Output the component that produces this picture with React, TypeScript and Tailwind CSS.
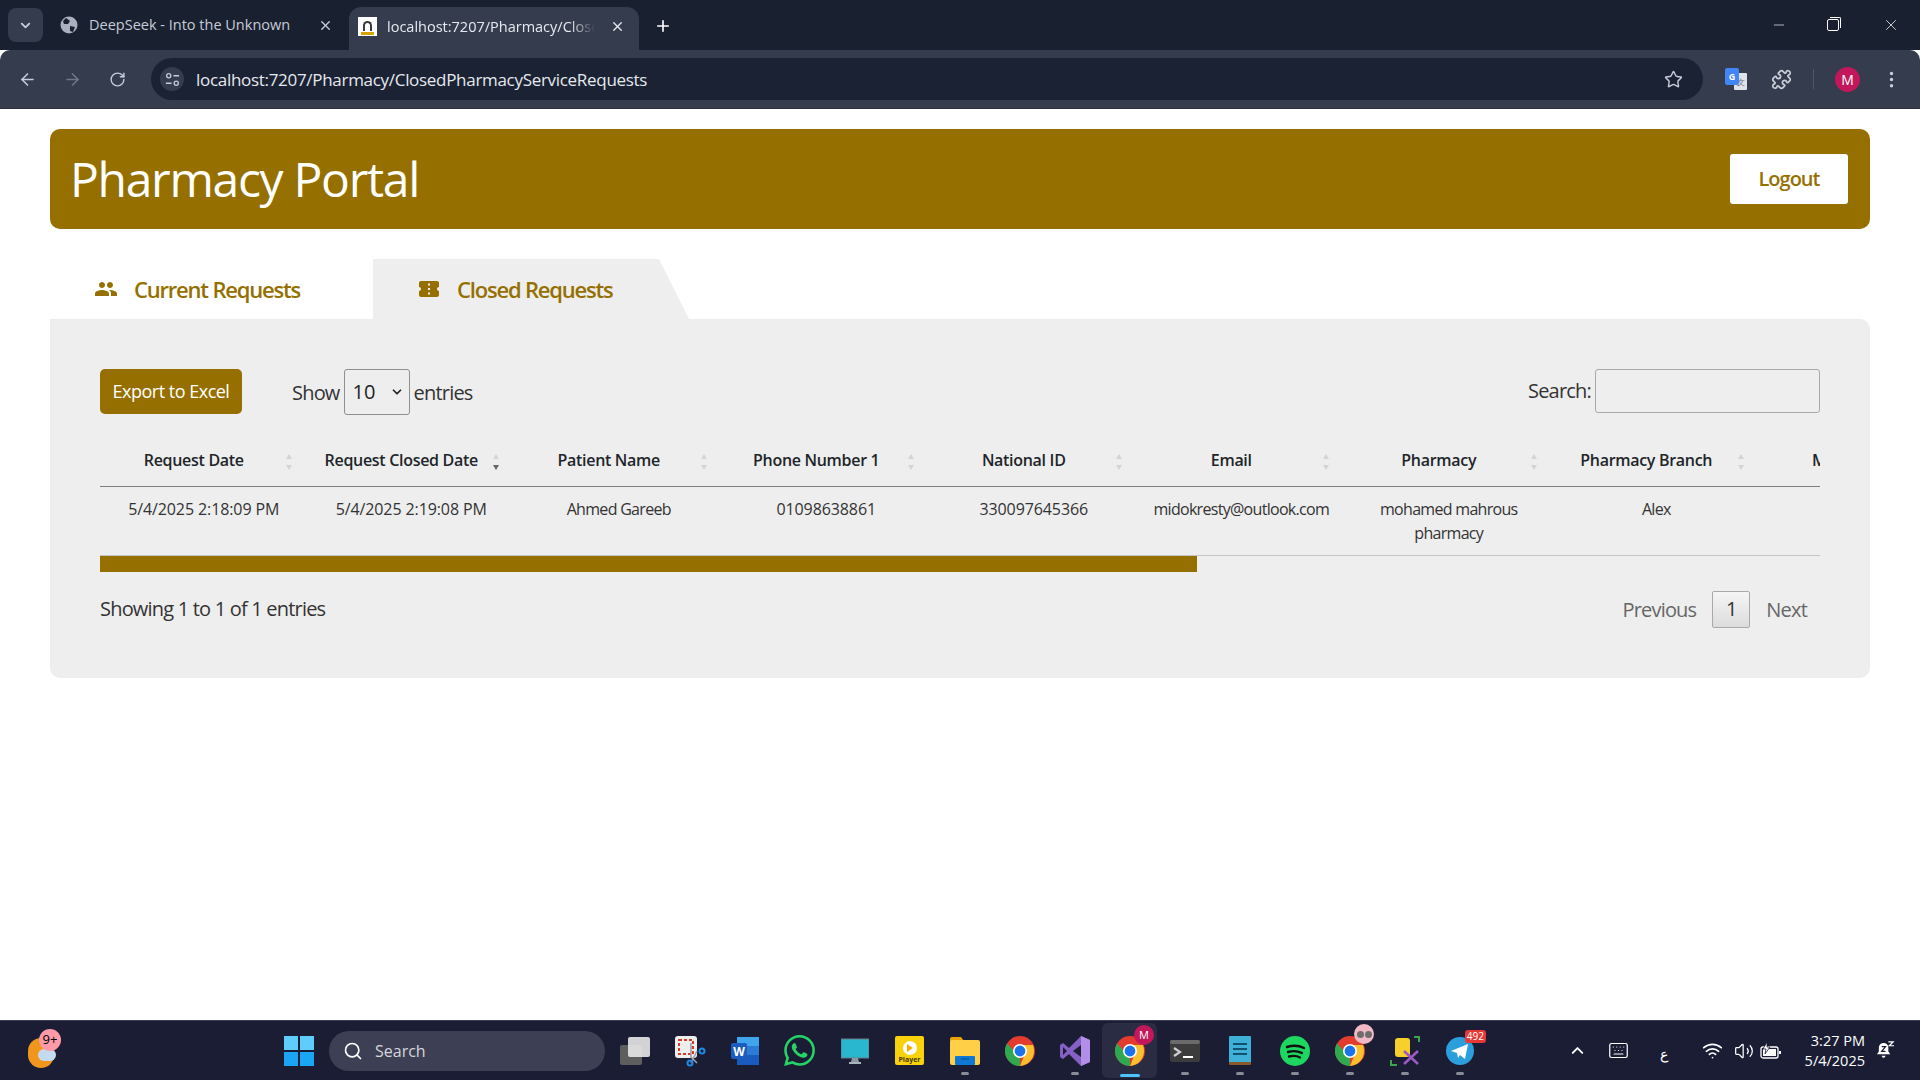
import React from 'react';
import { ArrowLeft, ArrowRight, RotateCw, Star, Puzzle, EllipsisVertical, ChevronDown, ChevronUp, X, Plus, Minus, Search, Wifi, Volume2, Keyboard } from 'lucide-react';

const gold = 'bg-[#957000]';

const columns = [
  { head: 'Request Date', cell: '5/4/2025 2:18:09 PM' },
  { head: 'Request Closed Date', cell: '5/4/2025 2:19:08 PM', sorted: true },
  { head: 'Patient Name', cell: 'Ahmed Gareeb', narrow: true },
  { head: 'Phone Number 1', cell: '01098638861' },
  { head: 'National ID', cell: '330097645366' },
  { head: 'Email', cell: 'midokresty@outlook.com', narrow: true },
  { head: 'Pharmacy', cell: 'mohamed mahrous pharmacy', narrow: true },
  { head: 'Pharmacy Branch', cell: 'Alex', narrow: true },
  { head: 'Medication', cell: '' },
];

const SortIcon = ({ active }: { active?: boolean }) => (
  <svg viewBox="0 0 8 18" className="absolute right-[15px] top-[19px] w-[8px] h-[18px]">
    <path d="M4 1 7 6H1z" fill="#d4d4d4" />
    <path d="M4 17 7 12H1z" fill={active ? '#666' : '#d4d4d4'} />
  </svg>
);

const Dot = () => <div className="absolute bottom-[3px] left-1/2 -translate-x-1/2 w-2 h-[3px] rounded-full bg-[#8a8b97]" />;

const TaskIcon = ({ children, dot, active }: { children: React.ReactNode; dot?: boolean; active?: boolean }) => (
  <div className={`relative w-[55px] h-[55px] flex items-center justify-center rounded-md ${active ? 'bg-[#2a2c44]' : ''}`}>
    {children}
    {dot && !active && <Dot />}
    {active && <div className="absolute bottom-[1px] left-1/2 -translate-x-1/2 w-5 h-[3px] rounded-full bg-[#4cc2ff]" />}
  </div>
);

const ChromeLogo = () => (
  <svg viewBox="0 0 30 30" className="w-[30px] h-[30px]">
    <circle cx="15" cy="15" r="15" fill="#e33b2e" />
    <path d="M15 30A15 15 0 0 1 2 7.5L9 15l6 7z" fill="#2fa84f" />
    <path d="M15 30 21 15h8A15 15 0 0 1 15 30z" fill="#fbc02d" />
    <path d="M15 9h13a15 15 0 0 1 1 6h-7z" fill="#fbc02d" />
    <circle cx="15" cy="15" r="7" fill="#fff" />
    <circle cx="15" cy="15" r="5.4" fill="#1a73e8" />
  </svg>
);

export default function App() {
  return (
    <div className="h-[1080px] w-[1920px] flex flex-col overflow-hidden bg-white font-['Open_Sans',sans-serif]">
      {/* browser tabs */}
      <div className="h-[50px] bg-[#19202f] flex items-end pl-[8px] text-[#c6ccd8] text-[14.5px] relative">
        <div className="self-start mt-[8px] w-[35px] h-[34px] rounded-lg bg-[#343c4d] flex items-center justify-center">
          <ChevronDown size={15} strokeWidth={3} />
        </div>
        <div className="w-[306px] h-[44px] flex items-center pl-[17px] pr-[16px] pb-[6px]">
          <svg viewBox="0 0 18 18" className="w-[18px] h-[18px]">
            <circle cx="9" cy="9" r="8.5" fill="#aab0bd" />
            <path d="M6 2 10 5 8 8 4 8 3 5zM10 10l5 1-2 5-3-1z" fill="#19202f" />
          </svg>
          <span className="ml-[11px] flex-1 whitespace-nowrap [font-stretch:95%]">DeepSeek - Into the Unknown</span>
          <X size={15} strokeWidth={2.2} />
        </div>
        <div className="w-[290px] h-[43px] rounded-t-xl bg-[#343c4d] flex items-center pl-[9px] pr-[12px] pb-[4px] text-[#e6e9ef]">
          <div className="w-[19px] h-[19px] bg-white flex flex-col items-center justify-end pb-[1px]">
            <div className="w-[9px] h-[10px] border-x-2 border-t-2 border-[#3a3a3a] rounded-t-full mb-[1px]" />
            <div className="w-[13px] h-[3px] bg-[#d5a400]" />
          </div>
          <span className="ml-[10px] w-[208px] overflow-hidden whitespace-nowrap [font-stretch:95%] [mask-image:linear-gradient(to_right,black_88%,transparent)]">localhost:7207/Pharmacy/Close</span>
          <X size={15} strokeWidth={2.2} className="ml-[15px]" />
        </div>
        <Plus size={18} strokeWidth={2.2} className="ml-[15px] mb-[15px] text-white" />
        <div className="ml-auto flex items-center self-start mt-[16px] text-white">
          <Minus size={16} strokeWidth={1} className="mr-[40px]" />
          <div className="relative w-[12px] h-[12px] border border-white rounded-[2px] mr-[43px]">
            <div className="absolute -top-[3px] -right-[3px] w-[11px] h-[11px] border-t border-r border-white rounded-tr-[2px]" />
          </div>
          <X size={18} strokeWidth={1} className="mr-[20px]" />
        </div>
      </div>

      {/* toolbar */}
      <div className="h-[59px] bg-[#343c4d] border-b border-[#2b3140] rounded-t-[10px] flex items-center pl-[18px] pr-[10px] text-[#c6ccd8]">
        <ArrowLeft size={19} />
        <ArrowRight size={19} className="ml-[26px] text-[#6f7686]" />
        <RotateCw size={17} className="ml-[27px]" />
        <div className="ml-[25px] w-[1552px] h-[42px] rounded-full bg-[#1a2233] flex items-center pl-[9px] pr-[20px]">
          <div className="w-[24px] h-[24px] rounded-full bg-[#343c4d] flex items-center justify-center">
            <svg viewBox="0 0 16 16" className="w-[15px] h-[15px]" fill="none" stroke="currentColor" strokeWidth="1.4">
              <circle cx="4" cy="4" r="2.2" />
              <path d="M9 4h6M1 12h6" />
              <circle cx="12" cy="12" r="2.2" />
            </svg>
          </div>
          <span className="ml-[12px] text-[17px] text-[#e6e9ef] tracking-[-0.3px] pt-[1px]">localhost:7207/Pharmacy/ClosedPharmacyServiceRequests</span>
          <Star size={19} className="ml-auto" strokeWidth={1.8} />
        </div>
        <div className="ml-[22px] relative w-[22px] h-[22px]">
          <div className="absolute right-0 bottom-0 w-[13px] h-[17px] bg-[#dfe3e8] rounded-[1px] text-[#5f6b7a] text-[8px] leading-[17px] text-right pr-[2px]">文</div>
          <div className="absolute left-0 top-0 w-[14px] h-[17px] bg-[#4285f4] rounded-[2px] flex items-center justify-center text-white text-[9px] font-bold">G</div>
        </div>
        <Puzzle size={21} className="ml-[24px]" />
        <div className="ml-[21px] w-px h-[20px] bg-[#505868]" />
        <div className="ml-[21px] w-[25px] h-[25px] rounded-full bg-[#c2185b] text-white text-[14px] flex items-center justify-center">M</div>
        <EllipsisVertical size={21} className="ml-[21px]" />
      </div>

      {/* page */}
      <div className="flex-1 px-[50px] pt-[20px] text-[#212529] [font-stretch:90%]">
        <header className={`h-[100px] rounded-[10px] ${gold} flex items-center justify-between pl-[20px] pr-[22px]`}>
          <h1 className="text-[48px] text-white font-normal tracking-[-1.3px]">Pharmacy Portal</h1>
          <button className="w-[118px] h-[50px] bg-white rounded-[3px] text-[20px] font-semibold text-[#957000] tracking-[-1px]">Logout</button>
        </header>

        <nav className="mt-[30px] h-[60px] flex text-[22px] font-semibold text-[#957000] tracking-[-1.2px]">
          <div className="w-[323px] flex items-center pl-[44px]">
            <svg viewBox="0 0 24 24" fill="currentColor" className="w-[24px] h-[24px]">
              <path d="M16 11c1.66 0 2.99-1.34 2.99-3S17.66 5 16 5c-1.66 0-3 1.34-3 3s1.34 3 3 3zm-8 0c1.66 0 2.99-1.34 2.99-3S9.66 5 8 5C6.34 5 5 6.34 5 8s1.34 3 3 3zm0 2c-2.33 0-7 1.17-7 3.5V19h14v-2.5c0-2.33-4.67-3.5-7-3.5zm8 0c-.29 0-.62.02-.97.05 1.16.84 1.97 1.97 1.97 3.45V19h6v-2.5c0-2.33-4.67-3.5-7-3.5z" />
            </svg>
            <span className="ml-[16px]">Current Requests</span>
          </div>
          <div className="w-[316px] flex items-center pl-[44px] bg-[#eeeeee] [clip-path:polygon(0_0,286px_0,100%_100%,0_100%)]">
            <svg viewBox="0 0 24 24" fill="currentColor" className="w-[24px] h-[24px]">
              <path d="M22 10V6c0-1.11-.9-2-2-2H4c-1.1 0-1.99.89-1.99 2v4c1.1 0 1.99.9 1.99 2s-.89 2-2 2v4c0 1.1.9 2 2 2h16c1.1 0 2-.9 2-2v-4c-1.1 0-2-.9-2-2s.9-2 2-2zm-9 7.5h-2v-2h2v2zm0-4.5h-2v-2h2v2zm0-4.5h-2v-2h2v2z" />
            </svg>
            <span className="ml-[16px]">Closed Requests</span>
          </div>
        </nav>

        <section className="h-[359px] bg-[#eeeeee] rounded-b-[10px] rounded-tr-[10px] px-[50px] pt-[50px]">
          <div className="flex items-start h-[45px] text-[20px] text-[#333] tracking-[-0.8px]">
            <button className={`w-[142px] h-[45px] rounded-[5px] ${gold} text-white text-[18px] font-medium tracking-[-0.5px]`}>Export to Excel</button>
            <span className="ml-[50px] leading-[48px]">Show</span>
            <div className="ml-[4px] w-[66px] h-[46px] border border-[#8f8f8f] rounded-[3px] flex items-center justify-between pl-[8px] pr-[5px] text-[#222] tracking-normal">
              10
              <ChevronDown size={14} strokeWidth={3} />
            </div>
            <span className="ml-[4px] leading-[48px]">entries</span>
            <span className="ml-auto leading-[44px]">Search:</span>
            <div className="ml-[4px] w-[225px] h-[44px] border border-[#a9a9a9] rounded-[3px]" />
          </div>

          <div className="mt-[20px] w-[1720px] overflow-hidden">
            <table className="table-fixed w-[1867.5px] border-collapse text-[16px] text-[#333]">
              <thead>
                <tr className="h-[52px] border-b border-[#808080]">
                  {columns.map((c) => (
                    <th key={c.head} className="relative font-semibold text-center pl-[10px] pr-[30px] text-[#212529] whitespace-nowrap tracking-[-0.3px]">
                      {c.head}
                      {c.head !== 'Medication' && <SortIcon active={c.sorted} />}
                    </th>
                  ))}
                </tr>
              </thead>
              <tbody>
                <tr className="border-b border-[#c4c4c4]">
                  {columns.map((c) => (
                    <td key={c.head} className={`h-[69px] align-top text-center px-[10px] pt-[10px] leading-[24px] ${c.narrow ? 'tracking-[-0.7px]' : 'tracking-[-0.1px]'}`}>
                      {c.head === 'Pharmacy' ? <span className="inline-block w-[150px]">{c.cell}</span> : c.cell}
                    </td>
                  ))}
                </tr>
              </tbody>
            </table>
            <div className={`w-[1097px] h-[16px] ${gold}`} />
          </div>

          <div className="mt-[19px] flex items-center justify-between text-[20px] text-[#333] tracking-[-0.8px]">
            <span>Showing 1 to 1 of 1 entries</span>
            <div className="flex items-center text-[#666] pr-[13px]">
              <span className="pt-[1px]">Previous</span>
              <span className="ml-[16px] w-[38px] h-[37px] border border-[#a9a9a9] rounded-[2px] bg-gradient-to-b from-[#f5f5f5] to-[#dcdcdc] text-[#333] flex items-center justify-center">1</span>
              <span className="ml-[16px] pt-[1px]">Next</span>
            </div>
          </div>
        </section>
      </div>

      {/* taskbar */}
      <div className="h-[60px] bg-[#1b1d35] border-t border-[#3a3c50] flex items-center text-white text-[14px]">
        <div className="relative w-[270px] h-full">
          <div className="absolute left-[28px] top-[17px] w-[26px] h-[30px] rounded-full bg-[#f0961c]" />
          <div className="absolute left-[38px] top-[28px] w-[18px] h-[12px] rounded-full bg-[#c5d9ef]" />
          <div className="absolute left-[39px] top-[8px] w-[22px] h-[22px] rounded-full bg-[#ff9aa8] text-black text-[13px] flex items-center justify-center">9+</div>
        </div>
        <svg viewBox="0 0 30 30" className="w-[30px] h-[30px] mr-[15px] ml-[14px]">
          <path d="M0 0h14v14H0z" fill="#5fcdfb" /><path d="M16 0h14v14H16z" fill="#5fcdfb" /><path d="M0 16h14v14H0z" fill="#1ba6f5" /><path d="M16 16h14v14H16z" fill="#1ba6f5" />
        </svg>
        <div className="w-[276px] h-[40px] rounded-full bg-[#3d3f55] flex items-center pl-[14px] text-[#d5d6dc] text-[16px]">
          <Search size={20} className="text-white" />
          <span className="ml-[12px]">Search</span>
        </div>
        <div className="ml-[2px] flex">
          <TaskIcon>
            <div className="relative w-[30px] h-[28px]">
              <div className="absolute left-0 bottom-0 w-[22px] h-[20px] rounded-[2px] bg-[#5e5e5e]" />
              <div className="absolute right-0 top-0 w-[22px] h-[20px] rounded-[2px] bg-[#e8e8e8]/90" />
            </div>
          </TaskIcon>
          <TaskIcon>
            <svg viewBox="0 0 32 32" className="w-[32px] h-[32px]">
              <rect x="1" y="1" width="22" height="22" rx="3" fill="#eee" />
              <rect x="5" y="5" width="14" height="14" fill="none" stroke="#d93a26" strokeWidth="2" strokeDasharray="3 2" />
              <path d="M17 8v14l6 6M23 16l-6 12" stroke="#9aa0a6" strokeWidth="1.6" fill="none" />
              <circle cx="28" cy="16" r="2.5" fill="none" stroke="#1e88e5" strokeWidth="2" />
              <circle cx="16" cy="28" r="2.5" fill="none" stroke="#1e88e5" strokeWidth="2" />
            </svg>
          </TaskIcon>
          <TaskIcon>
            <svg viewBox="0 0 30 30" className="w-[30px] h-[30px]">
              <rect x="7" y="1" width="22" height="28" rx="2" fill="#2b7cd3" />
              <rect x="7" y="1" width="22" height="9" fill="#41a5ee" />
              <rect x="7" y="19" width="22" height="10" fill="#185abd" />
              <rect x="1" y="7" width="16" height="16" rx="2" fill="#1a5cbf" />
              <text x="9" y="20" textAnchor="middle" fontSize="12" fontWeight="700" fill="#fff" fontFamily="Open Sans">W</text>
            </svg>
          </TaskIcon>
          <TaskIcon>
            <svg viewBox="0 0 24 24" className="w-[31px] h-[31px]" fill="#25d366">
              <path d="M17.47 14.38c-.3-.15-1.76-.87-2.03-.97-.27-.1-.47-.15-.67.15-.2.3-.77.97-.94 1.17-.17.2-.35.22-.64.07-.3-.15-1.26-.46-2.39-1.47-.88-.79-1.48-1.76-1.65-2.06-.17-.3-.02-.46.13-.61.13-.13.3-.35.45-.52.15-.17.2-.3.3-.5.1-.2.05-.37-.02-.52-.07-.15-.67-1.61-.92-2.21-.24-.58-.49-.5-.67-.51h-.57c-.2 0-.52.07-.79.37-.27.3-1.04 1.02-1.04 2.48 0 1.46 1.07 2.88 1.21 3.07.15.2 2.1 3.2 5.08 4.49.71.31 1.26.49 1.69.63.71.23 1.36.19 1.87.12.57-.09 1.76-.72 2.01-1.41.25-.7.25-1.29.17-1.41-.07-.12-.27-.2-.57-.35zM12.05 21.79h-.01a9.87 9.87 0 0 1-5.03-1.38l-.36-.21-3.74.98 1-3.65-.24-.37a9.86 9.86 0 0 1-1.51-5.26c0-5.45 4.44-9.88 9.89-9.88 2.64 0 5.12 1.03 6.99 2.9a9.83 9.83 0 0 1 2.89 6.99c0 5.45-4.44 9.88-9.88 9.88zm8.41-18.3A11.82 11.82 0 0 0 12.05 0C5.5 0 .16 5.34.16 11.89c0 2.1.55 4.14 1.59 5.95L.06 24l6.31-1.65a11.88 11.88 0 0 0 5.68 1.45h.01c6.55 0 11.89-5.34 11.89-11.89a11.82 11.82 0 0 0-3.49-8.41z" />
            </svg>
          </TaskIcon>
          <TaskIcon>
            <svg viewBox="0 0 28 26" className="w-[28px] h-[26px]">
              <rect x="0" y="1" width="28" height="19" fill="#29b6cf" stroke="#6d7d88" />
              <path d="M11 20h6l1 4h-8z" fill="#8b98a3" /><path d="M8 24h12v2H8z" fill="#aab4bd" />
            </svg>
          </TaskIcon>
          <TaskIcon>
            <div className="w-[29px] h-[29px] rounded-[2px] bg-[#fad20c] flex flex-col items-center pt-[5px]">
              <div className="w-[14px] h-[14px] rounded-full bg-white flex items-center justify-center">
                <div className="w-0 h-0 border-y-[4px] border-y-transparent border-l-[6px] border-l-[#f0b000]" />
              </div>
              <span className="text-[7px] font-bold leading-[9px] text-[#443a00]">Player</span>
            </div>
          </TaskIcon>
          <TaskIcon dot>
            <svg viewBox="0 0 30 28" className="w-[30px] h-[28px]">
              <path d="M0 2a2 2 0 0 1 2-2h9l3 4h-14z" fill="#e8a500" />
              <rect x="0" y="3" width="30" height="25" rx="2" fill="#ffcf48" />
              <rect x="5" y="19" width="20" height="9" rx="1" fill="#0f78d4" />
              <path d="M11 22h8" stroke="#0b4a86" strokeWidth="1" />
            </svg>
          </TaskIcon>
          <TaskIcon><ChromeLogo /></TaskIcon>
          <TaskIcon dot>
            <svg viewBox="0 0 30 30" className="w-[30px] h-[30px]">
              <path d="M21 0 30 4v22l-9 4-12-12-6 5-3-2V9l3-2 6 5z" fill="#8661c5" />
              <path d="M21 0 30 4v22l-9 4z" fill="#b38ee8" />
              <path d="M21 9v12l-8-6z" fill="#1b1d35" />
              <path d="M3 11v8l4-4z" fill="#1b1d35" />
            </svg>
          </TaskIcon>
          <TaskIcon active>
            <ChromeLogo />
            <div className="absolute top-[2px] right-[3px] w-[20px] h-[20px] rounded-full bg-[#c2185b] text-[11px] text-white flex items-center justify-center">M</div>
          </TaskIcon>
          <TaskIcon dot>
            <svg viewBox="0 0 30 22" className="w-[30px] h-[22px]">
              <rect width="30" height="22" rx="2" fill="#3c3c3c" />
              <rect width="30" height="4" rx="2" fill="#6a6a6a" />
              <path d="M4 8l6 4-6 4" fill="none" stroke="#cfcfcf" strokeWidth="2.2" />
              <path d="M13 17h10" stroke="#fff" strokeWidth="2" />
            </svg>
          </TaskIcon>
          <TaskIcon dot>
            <div className="relative w-[22px] h-[29px] rounded-[1px] bg-[#3fb0d8] border-b-[3px] border-[#8a5a2b] flex flex-col justify-center gap-[3px] px-[4px]">
              <div className="h-[2px] bg-[#12506e]" /><div className="h-[2px] bg-[#12506e]" /><div className="h-[2px] bg-[#12506e]" />
            </div>
          </TaskIcon>
          <TaskIcon dot>
            <svg viewBox="0 0 30 30" className="w-[30px] h-[30px]">
              <circle cx="15" cy="15" r="15" fill="#1ed760" />
              <path d="M7 11c6-2 12-1.500 17 1M8 16c5-1.500 10-1 14 1M9 20.500c4-1 8-.7 11 1" fill="none" stroke="#111" strokeWidth="2.4" strokeLinecap="round" />
            </svg>
          </TaskIcon>
          <TaskIcon dot>
            <ChromeLogo />
            <div className="absolute top-[1px] right-[3px] w-[20px] h-[20px] rounded-full bg-[#f2b8c6] flex items-center justify-center gap-[1px]">
              <div className="w-[7px] h-[7px] rounded-full bg-[#6d6d6d]" /><div className="w-[7px] h-[7px] rounded-full bg-[#6d6d6d]" />
            </div>
          </TaskIcon>
          <TaskIcon dot>
            <svg viewBox="0 0 30 30" className="w-[30px] h-[30px]">
              <rect x="5" y="2" width="15" height="19" rx="3" fill="#f7d02c" />
              <path d="M24 1h5v5M1 24v5h6" fill="none" stroke="#3fa34d" strokeWidth="2" />
              <path d="M14 15 28 28M28 15 14 28" stroke="#9b59c6" strokeWidth="2.6" />
            </svg>
          </TaskIcon>
          <TaskIcon dot>
            <svg viewBox="0 0 28 28" className="w-[28px] h-[28px]">
              <circle cx="14" cy="14" r="14" fill="#2a9fdc" />
              <path d="M5 14 22 7l-3 15-5-4-2 3-1-5z" fill="#fff" />
            </svg>
            <div className="absolute top-[7px] right-[1px] h-[13px] px-[2px] rounded-[3px] bg-[#e53935] text-white text-[10px] leading-[13px]">492</div>
          </TaskIcon>
        </div>
        <div className="ml-auto flex items-center pr-[25px] text-white">
          <ChevronUp size={19} strokeWidth={2.4} />
          <Keyboard size={21} strokeWidth={1.4} className="ml-[21px]" />
          <span className="ml-[31px] w-[20px] text-[14px] pt-[5px]">ع</span>
          <Wifi size={21} className="ml-[22px]" />
          <Volume2 size={20} strokeWidth={1.5} className="ml-[11px]" />
          <svg viewBox="0 0 22 18" className="ml-[6px] w-[22px] h-[18px]">
            <rect x="1" y="5" width="17" height="11" rx="2" fill="none" stroke="#fff" strokeWidth="1.300" />
            <rect x="3" y="7" width="13" height="7" fill="#fff" />
            <path d="M19 9h2v3h-2z" fill="#fff" />
            <path d="M7 0 3 7h3l-1 5 5-7H7z" fill="#fff" stroke="#1b1d35" strokeWidth="0.8" />
          </svg>
          <div className="ml-[17px] w-[66px] text-right text-[14.5px] leading-[20px] whitespace-nowrap">
            <div>3:27 PM</div>
            <div>5/4/2025</div>
          </div>
          <svg viewBox="0 0 20 20" className="ml-[11px] w-[19px] h-[19px]" fill="#fff">
            <path d="M8 2a5 5 0 0 0-5 5v4l-2 3h14l-2-3V7a5 5 0 0 0-5-5zM6 15.500a2 2 0 0 0 4 0z" />
            <path d="M6 6h4L6 11h4" fill="none" stroke="#1b1d35" strokeWidth="1.300" />
            <path d="M13 1h5l-4 4h5" fill="none" stroke="#fff" strokeWidth="1.300" />
          </svg>
        </div>
      </div>
    </div>
  );
}
